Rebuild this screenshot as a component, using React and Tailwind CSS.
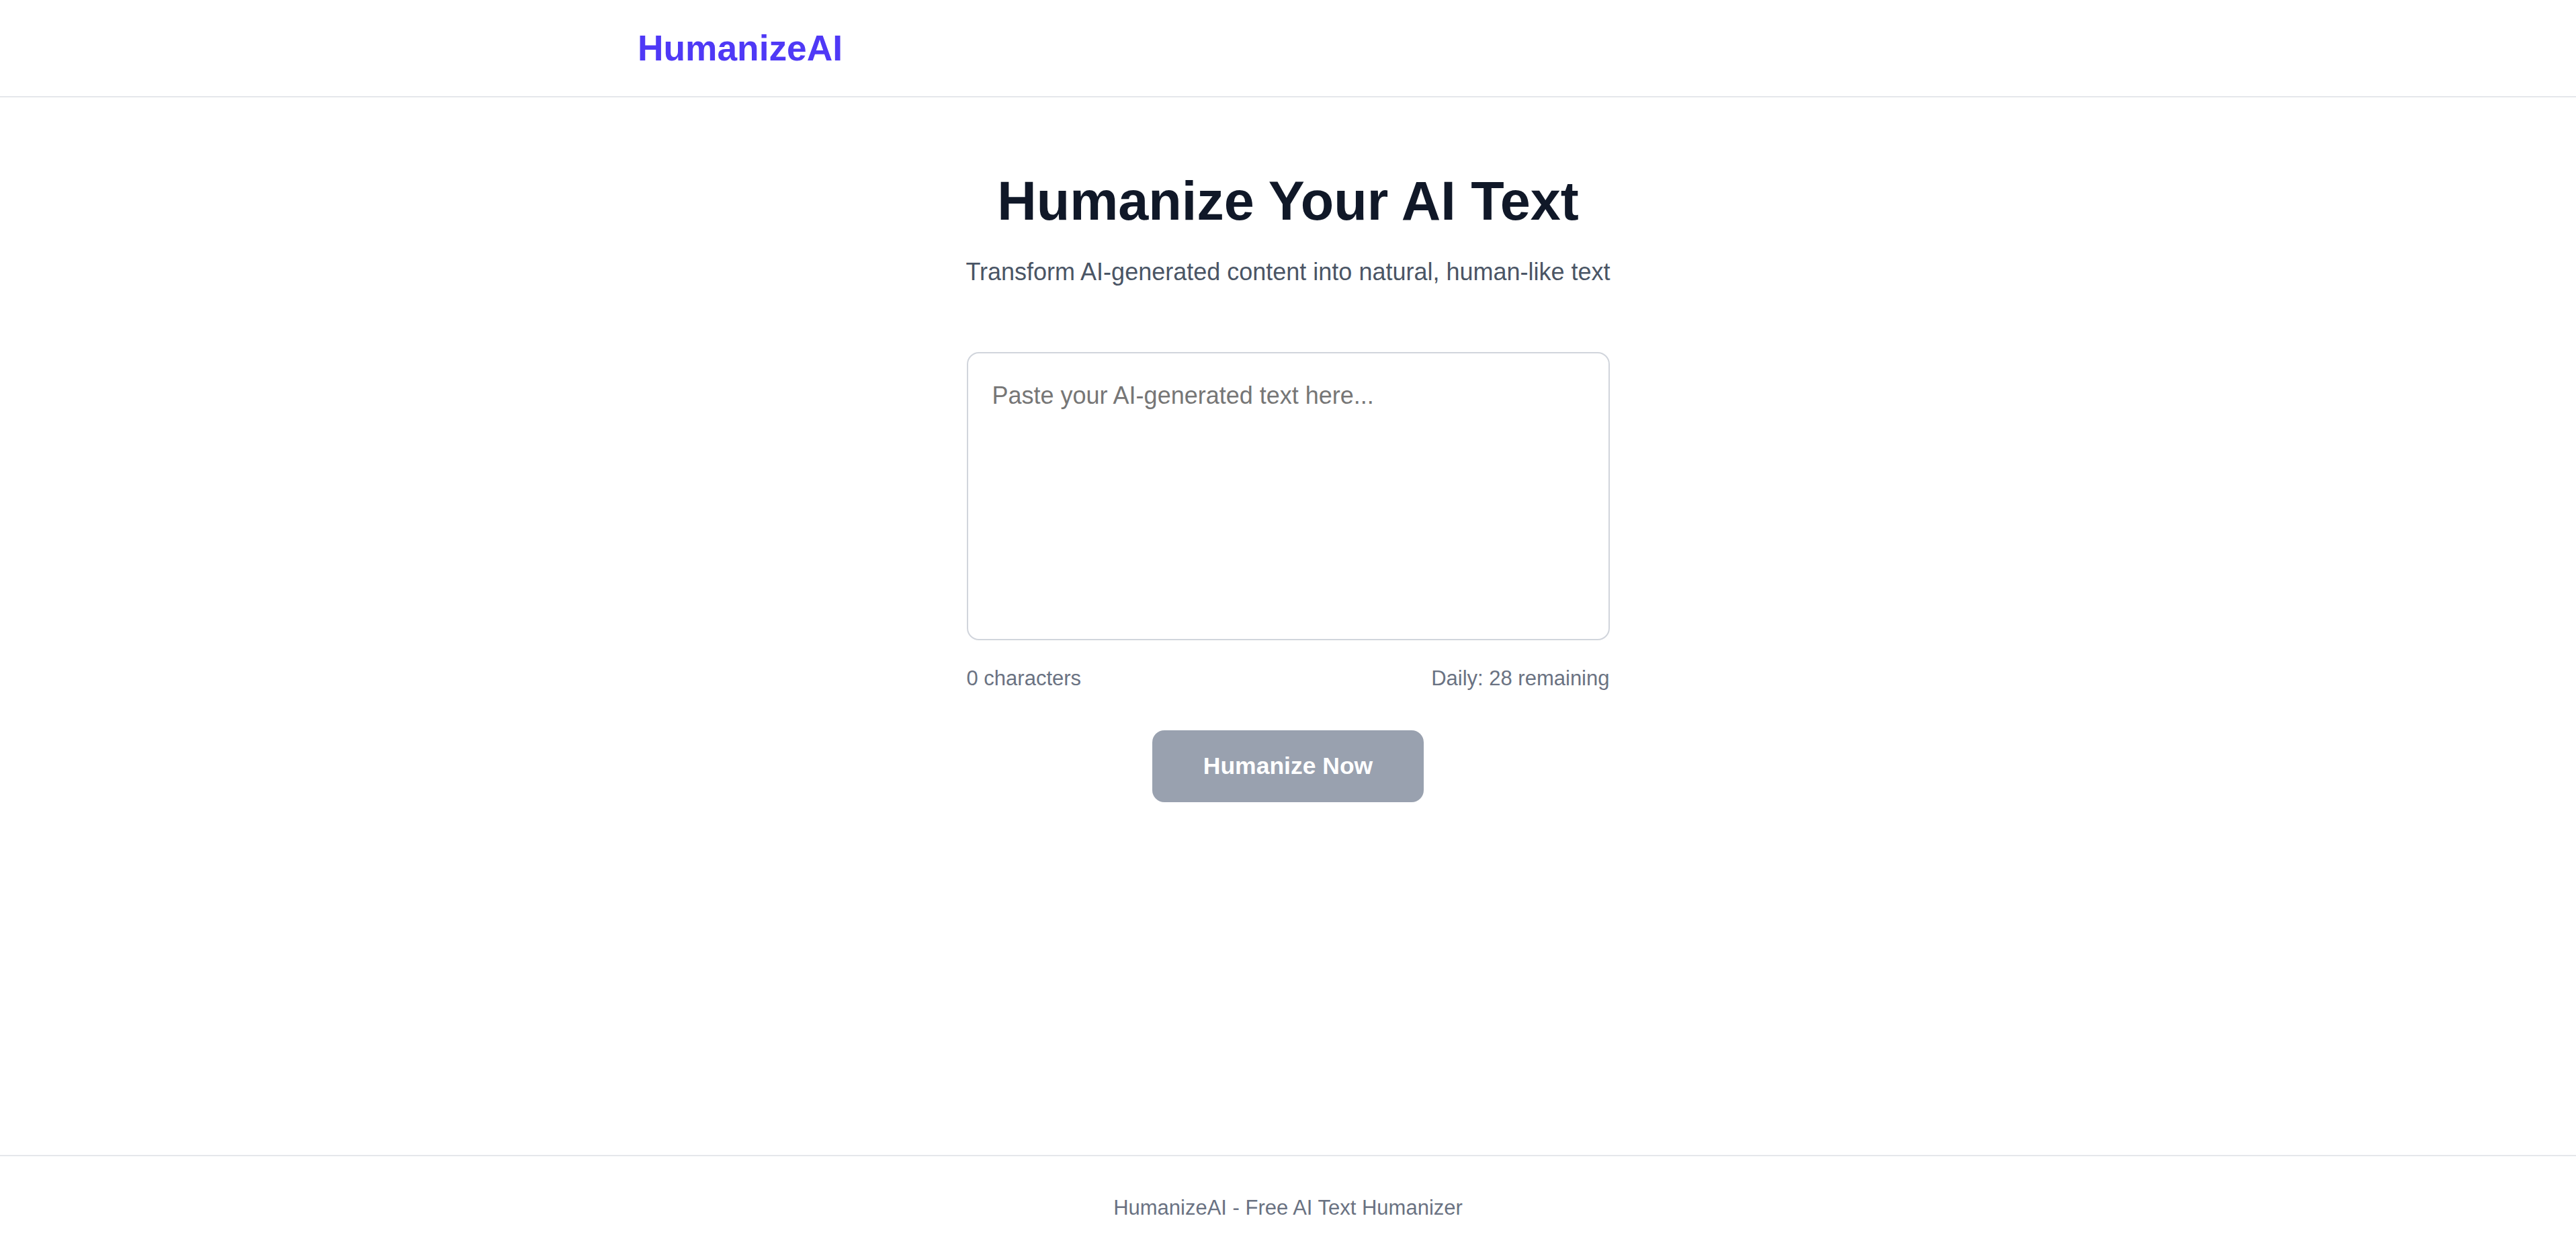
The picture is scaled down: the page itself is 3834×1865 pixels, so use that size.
import { useState } from "react";

export default function App() {
  const [text, setText] = useState("");
  const remaining = 28;

  return (
    <div className="min-h-screen flex flex-col bg-white font-['Liberation_Sans',Arial,sans-serif]">
      {/* Header */}
      <header className="border-b-2 border-[#e5e7eb]">
        <div className="w-[1936px] mx-auto py-[36px]">
          <span className="block text-[53.3px] leading-[71px] font-bold text-[#4f39f6]">
            HumanizeAI
          </span>
        </div>
      </header>

      {/* Main */}
      <main className="flex-1 flex flex-col items-center pt-[110px]">
        <h1 className="text-[81px] leading-[89px] font-bold text-[#101828] text-center">
          Humanize Your AI Text
        </h1>
        <p className="mt-[30px] text-[36px] leading-[62px] text-[#4a5565] text-center">
          Transform AI-generated content into natural, human-like text
        </p>

        <div className="mt-[88px] w-[957px]">
          <textarea
            value={text}
            onChange={(e) => setText(e.target.value)}
            placeholder="Paste your AI-generated text here..."
            className="block w-full h-[429px] resize-none rounded-[18px] border-2 border-[#d1d5dc] p-[36px] text-[36px] leading-[53px] text-[#101828] placeholder:text-[#767676] outline-none"
          />
          <div className="mt-[35px] flex justify-between text-[31px] leading-[44px] text-[#6a7282]">
            <span>{text.length} characters</span>
            <span>Daily: {remaining} remaining</span>
          </div>
        </div>

        <button
          disabled={!text.trim()}
          className="mt-[55px] w-[404px] h-[107px] rounded-[18px] bg-[#99a1af] text-white text-[35.5px] font-bold"
        >
          Humanize Now
        </button>
      </main>

      {/* Footer */}
      <footer className="border-t-2 border-[#e5e7eb] pt-[55px] pb-[45px] text-center">
        <p className="text-[31px] leading-[44px] text-[#6a7282]">
          HumanizeAI - Free AI Text Humanizer
        </p>
      </footer>
    </div>
  );
}
